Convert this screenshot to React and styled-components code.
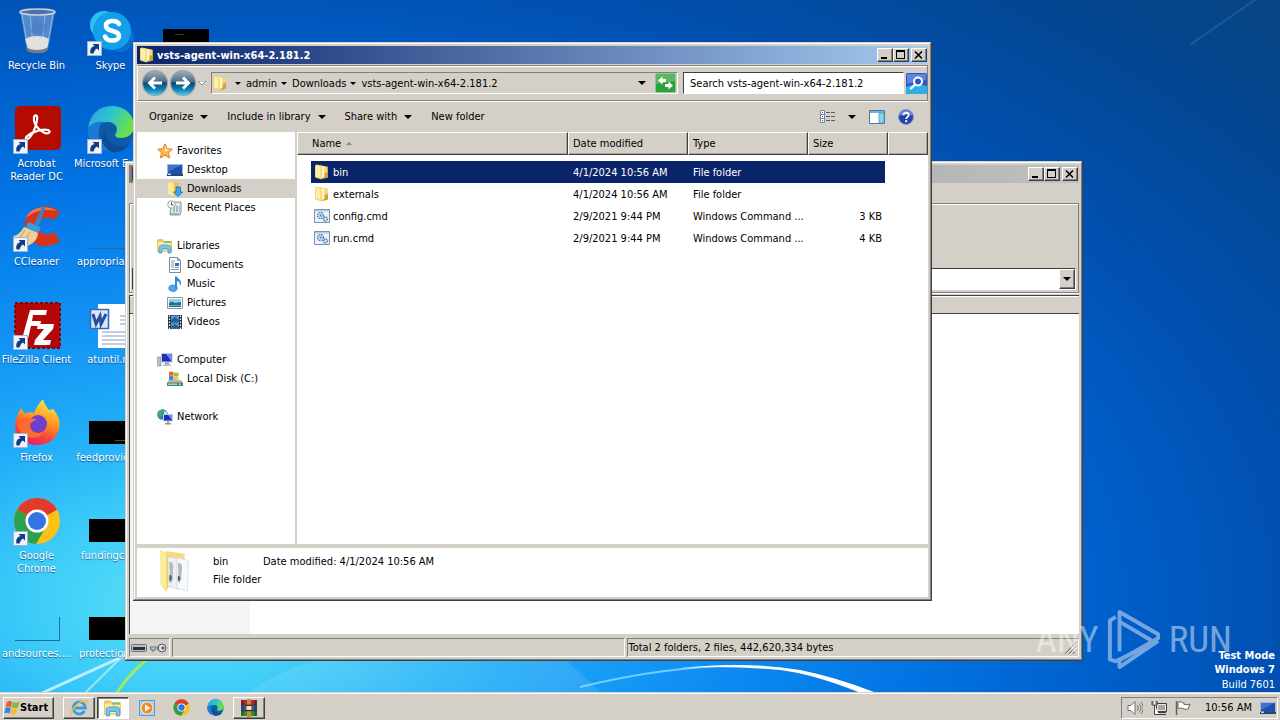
import React from "react";
import styled, { createGlobalStyle, css } from "styled-components";

const FACE = "#d4d0c8";
const NAVY = "#0a246a";

const Global = createGlobalStyle`
  html, body { margin: 0; height: 100%; }
  body, button, input, select, table {
    font-family: "DejaVu Sans Condensed", "DejaVu Sans", sans-serif;
    font-size: 11px;
    line-height: 13px;
    color: #000;
  }
  *, *::before, *::after { box-sizing: border-box; }
  button { margin: 0; padding: 0; border: 0; background: none; }
  svg { display: block; flex: none; }
`;

const raised = css`
  border: 1px solid;
  border-color: #fff #404040 #404040 #fff;
  box-shadow: inset -1px -1px 0 #808080;
  background: ${FACE};
`;

/* ---------- desktop ---------- */

const Screen = styled.div`
  display: grid;
  grid-template-rows: 1fr auto;
  min-height: 100vh;
  background: #0056b8;
`;

const Desktop = styled.main`
  position: relative;
  overflow: hidden;
  background: radial-gradient(
    ellipse 86% 92% at 15% 87%,
    #5be0f8 0%,
    #3fcdf8 14%,
    #22aef8 28%,
    #1090f4 46%,
    #0274e4 66%,
    #0060cc 82%,
    #0150b0 100%,
    #03458e 124%,
    #0a4580 140%
  );
`;

const Rays = styled.svg`
  position: absolute;
  inset: 0;
  width: 100%;
  height: 100%;
`;

const IconGrid = styled.ul`
  position: relative;
  display: grid;
  grid-auto-flow: column;
  grid-template-rows: repeat(6, 98px) 64px;
  grid-auto-columns: 74px;
  list-style: none;
  margin: 0;
  padding: 8px 0 0;
  width: max-content;
`;

const Shortcut = styled.a`
  display: flex;
  flex-direction: column;
  align-items: center;
  gap: 3px;
  width: 73px;
  color: #fff;
  text-decoration: none;
  text-align: center;
  text-shadow: 0 1px 1px rgba(0, 20, 80, 0.6);
  white-space: ${(p) => (p.$wrap ? "normal" : "nowrap")};
`;

const Watermark = styled.div`
  position: absolute;
  right: 48px;
  bottom: 20px;
  display: flex;
  align-items: center;
  gap: 7px;
  color: #fff;
  opacity: 0.45;
  font-family: "Roboto Condensed", "Liberation Sans Narrow", "Liberation Sans", sans-serif;
  font-size: 37px;
  line-height: 64px;
  pointer-events: none;
`;

const BuildNote = styled.p`
  position: absolute;
  right: 5px;
  bottom: 0;
  margin: 0;
  color: #fff;
  text-align: right;
  line-height: 15px;
  strong { display: block; line-height: 14px; }
`;

/* ---------- window chrome ---------- */

const Window = styled.section`
  position: absolute;
  left: ${(p) => p.$left}px;
  right: ${(p) => p.$right}px;
  top: ${(p) => p.$top}px;
  bottom: ${(p) => p.$bottom}px;
  display: flex;
  flex-direction: column;
  padding: 4px;
  background: ${FACE};
  box-shadow: inset -1px -1px 0 #404040, inset 1px 1px 0 ${FACE},
    inset -2px -2px 0 #808080, inset 2px 2px 0 #fff;
`;

const TitleBar = styled.header`
  display: flex;
  align-items: center;
  height: 18px;
  flex: none;
  padding: 0 1px 0 2px;
  gap: 2px;
  color: #fff;
  font-weight: bold;
  background: ${(p) =>
    p.$active
      ? "linear-gradient(to right, #0a246a, #a6caf0)"
      : "linear-gradient(to right, #808080, #c0c0c0)"};
  h1 { flex: 1; margin: 0; font-size: 11px; line-height: 13px; }
`;

const Controls = styled.div`
  display: flex;
  button:last-child { margin-left: 2px; }
`;

const ControlButton = styled.button`
  ${raised}
  width: 16px;
  height: 14px;
  display: grid;
  place-items: center;
`;

const WindowControls = () => (
  <Controls>
    <ControlButton aria-label="Minimize">
      <svg width="12" height="10"><path d="M2 7h6v2H2z" /></svg>
    </ControlButton>
    <ControlButton aria-label="Maximize">
      <svg width="12" height="10"><path d="M1 0h9v9H1zM2 2v6h7V2z" fillRule="evenodd" /></svg>
    </ControlButton>
    <ControlButton aria-label="Close">
      <svg width="12" height="10"><path d="M2 1.5l7 7M9 1.5l-7 7" stroke="#000" strokeWidth="1.6" /></svg>
    </ControlButton>
  </Controls>
);

/* ---------- archive window ---------- */

const MenuStrip = styled.div`
  height: 20px;
  flex: none;
`;

const ToolGroup = styled.div`
  display: flex;
  flex-direction: column;
  justify-content: flex-end;
  flex: none;
  height: 90px;
  padding: 2px;
  border: 1px solid #808080;
  box-shadow: inset 1px 1px 0 #fff, 0 1px 0 #fff;
`;

const PathSelect = styled.label`
  position: relative;
  display: flex;
  height: 22px;
  border: 1px solid;
  border-color: #404040 #fff #fff #404040;
  background: #fff;
  select {
    appearance: none;
    flex: 1;
    border: 0;
    background: #fff;
  }
`;

const DropMark = styled.span`
  ${raised}
  width: 16px;
  display: grid;
  place-items: center;
`;

const ColumnStrip = styled.div`
  height: 19px;
  margin-top: 2px;
  flex: none;
  border-top: 1px solid #404040;
  border-bottom: 1px solid #404040;
  border-left: 1px solid #404040;
  box-shadow: inset 0 1px 0 #fff;
`;

const ArchiveBody = styled.div`
  flex: 1;
  display: grid;
  grid-template-columns: 120px 1fr;
  background: #fff;
  border-left: 1px solid #404040;
  border-right: 1px solid #fff;
  div { background: #f4f4f4; }
`;

const StatusBar = styled.footer`
  display: grid;
  grid-template-columns: 41px 1fr 1fr;
  gap: 2px;
  flex: none;
  padding-top: 4px;
`;

const StatusCell = styled.div`
  display: flex;
  align-items: center;
  height: 19px;
  gap: 3px;
  padding: 0 1px;
  border: 1px solid;
  border-color: #808080 #fff #fff #808080;
  white-space: nowrap;
`;

/* ---------- explorer ---------- */

const NavBar = styled.nav`
  display: flex;
  align-items: center;
  height: 36px;
  flex: none;
  margin-top: 1px;
  padding: 0 0 0 3px;
  border: 1px solid;
  border-color: #808080 #808080 #808080 #fff;
  box-shadow: inset 0 1px 0 #fff, 0 1px 0 #fff;
`;

const IconButton = styled.button`
  display: grid;
  place-items: center;
  flex: none;
  width: ${(p) => p.$w || 22}px;
  height: ${(p) => p.$h || 22}px;
`;

const AddressBar = styled.div`
  display: flex;
  align-items: center;
  flex: 1;
  height: 22px;
  margin: 0 5px 0 4px;
  border: 1px solid;
  border-color: #808080 #fff #fff #808080;
  > svg { margin-right: 3px; }
`;

const Crumb = styled.button`
  display: flex;
  align-items: center;
  gap: 5px;
  margin-left: 4px;
  white-space: nowrap;
`;

const Grow = styled.span`
  flex: 1;
`;

const SearchBox = styled.input`
  width: 221px;
  height: 22px;
  margin-right: 1px;
  padding: 0 6px;
  border: 1px solid;
  border-color: #404040 #fff #fff #404040;
  border-radius: 0;
  background: #fff;
  &::placeholder { color: #000; opacity: 1; }
`;

const CommandBar = styled.div`
  display: flex;
  align-items: center;
  height: 31px;
  flex: none;
  padding: 0 14px 0 12px;
  gap: 19px;
`;

const Command = styled.button`
  display: flex;
  align-items: center;
  gap: ${(p) => (p.$split ? 12 : 7)}px;
  white-space: nowrap;
`;

const ViewTools = styled.div`
  display: flex;
  align-items: center;
  margin-left: auto;
  gap: 13px;
`;

const Panes = styled.div`
  flex: 1;
  display: grid;
  grid-template-columns: 158px 1fr;
  gap: 2px;
  min-height: 0;
`;

const Tree = styled.aside`
  background: #fff;
  padding: 9px 0 0;
  ul { list-style: none; margin: 0 0 19px; padding: 0; }
`;

const TreeItem = styled.a`
  display: flex;
  align-items: center;
  gap: 4px;
  height: 19px;
  padding-left: ${(p) => (p.$root ? 20 : 30)}px;
  background: ${(p) => (p.$selected ? FACE : "transparent")};
  color: #000;
  text-decoration: none;
`;

const FileTable = styled.table`
  display: block;
  background: #fff;
  border-collapse: collapse;
  thead, tbody { display: block; }
  tbody { padding: 6px 43px 0 14px; }
  th, td { font-weight: normal; text-align: left; padding: 0; }
`;

const HeadRow = styled.tr`
  display: grid;
  grid-template-columns: 1fr 120px 120px 80px 40px;
  height: 23px;
`;

const HeadCell = styled.th`
  display: flex;
  align-items: center;
  gap: 5px;
  background: ${FACE};
  border: 1px solid;
  border-color: #fff #404040 #404040 #fff;
  box-shadow: inset -1px -1px 0 #a8a49c;
  && { padding-left: ${(p) => (p.$first ? 14 : 4)}px; }
`;

const FileRow = styled.tr`
  display: grid;
  grid-template-columns: 1fr 120px 120px 77px;
  align-items: center;
  height: 22px;
  background: ${(p) => (p.$selected ? NAVY : "transparent")};
  color: ${(p) => (p.$selected ? "#fff" : "#000")};
  && td { padding-left: 5px; white-space: nowrap; overflow: hidden; text-overflow: ellipsis; }
  && td:first-child { padding-left: 3px; }
  && td:nth-child(3) { padding-right: 4px; }
  && td:last-child { text-align: right; padding-right: 3px; }
`;

const FileName = styled.span`
  display: flex;
  align-items: center;
  gap: 3px;
`;

const Details = styled.footer`
  display: flex;
  flex: none;
  align-items: center;
  gap: 20px;
  height: 49px;
  margin-top: 4px;
  padding: 0 0 4px 20px;
  background: #fff;
  dl { display: grid; grid-template-columns: 50px auto; row-gap: 4px; margin: 0; }
  dt, dd { margin: 0; line-height: 14px; }
`;

/* ---------- taskbar ---------- */

const Taskbar = styled.footer`
  display: flex;
  align-items: center;
  height: 28px;
  padding: 2px 2px 0 3px;
  background: ${FACE};
  border-top: 1px solid ${FACE};
  box-shadow: inset 0 1px 0 #fff;
`;

const StartButton = styled.button`
  ${raised}
  display: flex;
  align-items: center;
  height: 22px;
  width: 51px;
  margin-right: 9px;
  font-weight: bold;
`;

const TaskButton = styled.button`
  display: grid;
  place-items: center;
  width: 32px;
  height: 22px;
  margin-right: 2px;
  ${(p) => p.$open && raised}
  ${(p) =>
    p.$active &&
    css`
      background: #fdfcfa;
      border: 1px solid;
      border-color: #404040 #fff #fff #404040;
      box-shadow: inset 1px 1px 0 #808080;
    `}
`;

const Tray = styled.div`
  display: flex;
  align-items: center;
  gap: 8px;
  height: 22px;
  margin-left: auto;
  padding: 0 1px 0 5px;
  border: 1px solid;
  border-color: #808080 #fff #fff #808080;
  time { margin-left: 6px; white-space: nowrap; }
`;

/* ---------- drawings ---------- */

const Caret = ({ w = 8, color = "#000", stroke }) => (
  <svg width={w} height={w / 2} viewBox="0 0 8 4">
    <path d="M0 0h8L4 4z" fill={color} stroke={stroke} strokeWidth=".8" />
  </svg>
);

const Folder = ({ size = 16 }) => (
  <svg width={size} height={size} viewBox="0 0 16 16">
    <path d="M7 1.500l6.500 1v11L7 15z" fill="#e9c34a" />
    <path d="M10 8l4-1v6.500L9 15z" fill="#cfa235" />
    <path d="M7 2l3.500 .6v10L8 14z" fill="#fff7cf" />
    <path d="M1 1.400L2.500 .5 8 1.500V15.500l-5.500-1.500L1 13z" fill="#f3d870" />
    <path d="M2 1.500L6.500 2.500v11L2 12.500z" fill="#fdf0a6" />
    <path d="M11 3h2.500v5L11 9z" fill="#f5da70" />
  </svg>
);

const Monitor = () => (
  <svg width="16" height="16" viewBox="0 0 16 16">
    <path d="M0 2h16v12H0z" fill="#9db8d8" />
    <path d="M1 3h14v9H1z" fill="#1f4fae" />
    <path d="M1 3h14C9 5 5 8 1 10z" fill="#3c74cc" />
    <path d="M0 12h16v2H0z" fill="#27466f" />
    <path d="M1 11.500h3V13H1z" fill="#9fe0f8" />
  </svg>
);

const Star = () => (
  <svg width="16" height="16" viewBox="0 0 16 16">
    <path d="M8 .8l2.200 4.900 5.200.5-3.900 3.500 1.200 5.300L8 12.200l-4.700 2.800 1.200-5.300L.6 6.200l5.200-.5z" fill="#ffb648" stroke="#dc8430" strokeWidth="1" />
    <path d="M8 3l1.400 3.400 3 .4L8 9z" fill="#fff0b8" />
  </svg>
);

const DownloadFolder = () => (
  <svg width="16" height="16" viewBox="0 0 16 16">
    <path d="M7 1l5 1v12l-5 1z" fill="#e9c34a" />
    <path d="M1 1l6 1v13l-6-2z" fill="#fbe891" />
    <path d="M9 6h4.500v5h2L11 15.500 6.500 11H9z" fill="#3ba4ee" stroke="#1868b8" strokeWidth=".8" />
  </svg>
);

const Recent = () => (
  <svg width="16" height="16" viewBox="0 0 16 16">
    <path d="M4 2h10v10l-1 3H3z" fill="#dde8ea" stroke="#8a989c" />
    <path d="M6 7h7M6 9h7M6 11h7" stroke="#6d8f98" strokeDasharray="2 1" />
    <path d="M2 13h10l1 2H4z" fill="#9cb0b4" />
    <circle cx="4.500" cy="4.500" r="3.800" fill="#f4f8f8" stroke="#9ca8ac" />
    <path d="M4.500 2v3h2" stroke="#345" fill="none" strokeWidth=".8" />
  </svg>
);

const libraryArt = (
  <g>
    <path d="M0 2l1-1h5l1 2h8v11H0z" fill="#ecc95a" />
    <path d="M1 4h13v9H1z" fill="#fbeaa0" />
    <path d="M7 3h7v2H7z" fill="#7fc46a" />
    <path d="M2 15V9.500C2 7.500 4 7 8 7s6 .5 6 2.500V15h-3v-4H5v4z" fill="#7cc4ea" stroke="#3b8cc0" strokeWidth=".7" />
  </g>
);

const Library = () => (
  <svg width="16" height="16" viewBox="0 0 16 16">{libraryArt}</svg>
);

const Explorer = () => (
  <svg width="18" height="18" viewBox="0 0 16 16">{libraryArt}</svg>
);

const Doc = () => (
  <svg width="16" height="16" viewBox="0 0 16 16">
    <path d="M2.500 .5h8l3 3v12h-11z" fill="#fff" stroke="#7b8a9c" />
    <path d="M10.500 .5v3h3z" fill="#a8b8cc" stroke="#7b8a9c" strokeWidth=".7" />
    <path d="M4 4h4M4 6h3M4 8h3M4 10h3M4 12.500h8M8 10.500h4" stroke="#7f98b8" />
    <path d="M8 6h4v3H8z" fill="#2f6fbe" />
  </svg>
);

const Note = () => (
  <svg width="16" height="16" viewBox="0 0 16 16">
    <ellipse cx="6" cy="12.200" rx="4.200" ry="3.200" fill="#4fa8ea" stroke="#1d6fb8" strokeWidth=".6" />
    <path d="M8 .5h2c.5 2 4.500 3.200 4 7-.2 1.300-.8 2-1.200 2.300.5-2.800-.8-4.300-2.800-4.800v7.500H8z" fill="#2f8bdc" />
  </svg>
);

const Photo = () => (
  <svg width="16" height="16" viewBox="0 0 16 16">
    <path d="M.5 2.500h15v11H.5z" fill="#fff" stroke="#8898a4" />
    <path d="M2 4h12v8H2z" fill="#8fd4ee" />
    <path d="M2 8l3-1.500 3 1.500 6-1v5H2z" fill="#1f6f88" />
    <path d="M2 10h12v1H2z" fill="#65b3b8" />
  </svg>
);

const Film = () => (
  <svg width="16" height="16" viewBox="0 0 16 16">
    <path d="M1 1h14v14H1z" fill="#26303c" />
    <path d="M4 1.500h8v6H4zM4 8.500h8v6H4z" fill="#4f9cd8" />
    <path d="M5 5l3-2 4 3v1H4zM5 12l3-2 4 3v1H4z" fill="#2a5c8c" />
    <path d="M2.500 1.500v14M13.500 1.500v14" stroke="#fff" strokeWidth="1.200" strokeDasharray="1.500 1.500" />
  </svg>
);

const Computer = () => (
  <svg width="16" height="16" viewBox="0 0 16 16">
    <path d="M0 5h4v9H0z" fill="#b8c0c8" stroke="#7f8890" strokeWidth=".6" />
    <path d="M4 1h11.500v9.500H4z" fill="#c4ccd8" />
    <path d="M5 2h9.500v7.500H5z" fill="#1a2fc0" />
    <path d="M9 2h5.500v7.500z" fill="#6f8cf0" />
    <path d="M8 10.500h4v2H8z" fill="#8c94a0" />
    <path d="M6 12.500h8v1.500H6z" fill="#b4bcc8" />
  </svg>
);

const WinFlag = () => (
  <svg width="16" height="16" viewBox="0 0 16 16">
    <path d="M3 2c2-1.500 3.500-1.300 5.300-.3L7 7.200c-1.600-1-3.200-.8-5.300.1z" fill="#e8602c" />
    <path d="M9 2c1.800 1 3.600 1 6.500-.5l-1.500 6c-2 1.200-4 1-6.300 0z" fill="#84bc3c" />
    <path d="M1.500 8c2-1 3.600-.9 5.300 0l-1.300 5.500c-1.700-1-3.300-.9-5.300 0z" fill="#3a84dc" />
    <path d="M7.500 8.500c2 .9 3.800.9 6.200-.2l-1.500 5.500c-2 1.200-4 1-6 .1z" fill="#f4bc34" />
  </svg>
);

const Disk = () => (
  <svg width="16" height="16" viewBox="0 0 16 16">
    <path d="M2 1c2-.9 3-.7 4.500 0v4C5 4.500 4 4.500 2 5z" fill="#f0602c" />
    <path d="M7 1.200c1.500.7 3 .7 4.500 0v4c-1.500.7-3 .6-4.500 0z" fill="#8cc63e" />
    <path d="M2 5.500c2-.7 3-.5 4.500 0v4H2z" fill="#3a8ce0" />
    <path d="M7 5.700c1.500.6 3 .6 4.500 0v4H7z" fill="#fbc53a" />
    <path d="M2 9h12l2 3H0z" fill="#b8b89c" />
    <path d="M0 11.500h16V15H0z" fill="#4f7f8c" />
    <path d="M1 12.500h9v1.500H1z" fill="#a8d4c8" />
    <path d="M12 12.500h2v1.500h-2z" fill="#8cf07c" />
  </svg>
);

const Network = () => (
  <svg width="16" height="16" viewBox="0 0 16 16">
    <circle cx="5.500" cy="5.500" r="5.300" fill="#2484b8" />
    <path d="M1 4c2-3 4-4 6-3.500C8 3 5 3 5 5S3 9 2 9z" fill="#4ca86c" />
    <path d="M7 2l3 1v3H7z" fill="#b0e8f4" />
    <path d="M6 5h10v7.500H6z" fill="#c4ccd8" />
    <path d="M7 6h8v5.500H7z" fill="#1a2fc0" />
    <path d="M11 6h4v5.500z" fill="#6f8cf0" />
    <path d="M8 14h6v1.500H8zM10 12.500h2V14h-2z" fill="#8c94a0" />
  </svg>
);

const CmdFile = () => (
  <svg width="16" height="16" viewBox="0 0 16 16">
    <path d="M.5 1.500h15v13H.5z" fill="#eaf2fa" stroke="#7c90ac" />
    <path d="M1 2h14v1.500H1z" fill="#b8cce0" />
    <circle cx="6.500" cy="7.500" r="3" fill="#cfe2f4" stroke="#5a86b8" strokeWidth="1.400" strokeDasharray="1.600 .8" />
    <circle cx="6.500" cy="7.500" r="1" fill="#4a78ac" />
    <circle cx="11.500" cy="11" r="2" fill="#cfe2f4" stroke="#4a78ac" strokeWidth="1.300" strokeDasharray="1.200 .6" />
  </svg>
);

const NavBall = ({ flip, id }) => (
  <svg width="28" height="28" viewBox="0 0 28 28">
    <defs>
      <linearGradient id={id} x1="0" y1="0" x2="0" y2="1">
        <stop offset="0" stopColor="#a4b0b8" />
        <stop offset=".44" stopColor="#4c7088" />
        <stop offset=".5" stopColor="#0a4870" />
        <stop offset=".78" stopColor="#1088bc" />
        <stop offset="1" stopColor="#50d4f4" />
      </linearGradient>
    </defs>
    <circle cx="14" cy="14" r="12.500" fill={`url(#${id})`} stroke="#98a4ac" strokeWidth="1.200" />
    <path
      d="M13 7.500l-6.500 6.500 6.500 6.500 2-2-3-3H21v-3h-9l3-3z"
      fill="#fff"
      transform={flip ? "translate(28 0) scale(-1 1)" : undefined}
    />
  </svg>
);

const Refresh = () => (
  <svg width="21" height="20" viewBox="0 0 21 20">
    <rect x=".5" y=".5" width="20" height="19" rx="1.500" fill="#2ca03c" stroke="#8cc49a" />
    <path d="M1 1h19v7L1 11z" fill="#58b860" />
    <path d="M3 7.500L7.500 3.500v2.500H11v3H7.500v2.500z" fill="#fff" />
    <path d="M18 12.500L13.500 8.500v2.500H10v3h3.500v2.500z" fill="#fff" />
  </svg>
);

const SearchGlass = () => (
  <svg width="21" height="21" viewBox="0 0 21 21">
    <rect width="21" height="21" rx="1.500" fill="#2c54c8" />
    <path d="M0 14c7-3 14-3 21-1v8H0z" fill="#2bb0e4" />
    <path d="M1 1h19v6L1 11z" fill="#6084dc" />
    <circle cx="12" cy="8.500" r="4" fill="#2f58c4" stroke="#fff" strokeWidth="2" />
    <path d="M9 11.500L5 15.500" stroke="#fff" strokeWidth="2.400" strokeLinecap="round" />
  </svg>
);

const ViewIcon = () => (
  <svg width="16" height="13" viewBox="0 0 16 13">
    <path d="M.5.500h4v12h-4z" fill="#fff" stroke="#7c84a0" />
    <path d="M.5 4.500h4M.5 8.500h4" stroke="#7c84a0" />
    <path d="M2 2.500h1M2 6.500h1M2 10.500h1" stroke="#2f5cc0" />
    <path d="M6 2.500h10M6 6.500h10M6 10.500h10" stroke="#585c64" strokeDasharray="4 1" />
  </svg>
);

const PaneIcon = () => (
  <svg width="16" height="14" viewBox="0 0 16 14">
    <path d="M.5.500h15v13H.5z" fill="#fff" stroke="#4a78a4" />
    <path d="M1 1h14v2H1z" fill="#7cacdc" />
    <path d="M10 3h5v10h-5z" fill="#8cd4ec" stroke="#4a90b8" strokeWidth=".7" />
  </svg>
);

const HelpIcon = () => (
  <svg width="16" height="16" viewBox="0 0 16 16">
    <circle cx="8" cy="8" r="7.500" fill="#2444ac" stroke="#8c9cc8" />
    <path d="M1.500 7a6.500 6 0 0 1 13 0c-4-2-9-2-13 0z" fill="#6c88d8" />
    <path d="M5.500 6.200C5.500 3 10.700 3 10.700 6c0 1.800-2.500 2-2.500 4" fill="none" stroke="#fff" strokeWidth="1.800" />
    <circle cx="8.200" cy="12.200" r="1.100" fill="#fff" />
  </svg>
);

const BigFolder = () => (
  <svg width="36" height="44" viewBox="0 0 36 46">
    <path d="M8 2l20 3v6L10 8z" fill="#f4dc80" />
    <path d="M10 8l12 2v32l-12-3z" fill="#eef0f4" stroke="#c8ccd4" strokeWidth=".6" />
    <path d="M20 9l12 3-1 32-11-3z" fill="#f8f9fb" stroke="#c8ccd4" strokeWidth=".6" />
    <path d="M12 14c3-2 5 2 4 8s2 10-3 14zM21 15c4-2 5 3 4 9s1 7-3 12z" fill="#b4bac2" />
    <path d="M12 27c4 1 3 6 0 7zM21 28c4 1 3 5 0 6z" fill="#4c6078" />
    <path d="M3 1l8 5v33l-2 6-6-8z" fill="#ecd064" />
    <path d="M2 1h2l5 5v38L3 37z" fill="#fbec9c" />
  </svg>
);

const Badge = () => (
  <g>
    <path d="M5.500 33.500h14v14h-14z" fill="#eef4fc" stroke="#9cb4d4" />
    <path d="M8.500 45.500c-.800-4 .5-6.500 4-7.500l-2-2h6.500v6.500l-2-2c-2.500 1-2.500 3-3.500 5z" fill="#123c84" />
  </g>
);

const Big = ({ children, shortcut = true }) => (
  <svg width="58" height="48" viewBox="0 0 58 48">
    {children}
    {shortcut && <Badge />}
  </svg>
);

const RecycleBin = () => (
  <Big shortcut={false}>
    <path d="M12 3h35l-7 38c-5 4-16 4-21 0z" fill="#7ca4d4" fillOpacity=".65" />
    <path d="M14 6l6 34M45 6l-6 34M22 6l3 32M37 6l-3 32" stroke="#dceaf8" strokeOpacity=".45" />
    <path d="M17 31c6-4 18-4 24 0l-2 10c-5 3-14 3-19 0z" fill="#dfe0e0" />
    <path d="M18 39c5 4 17 4 22 0l-1 4c-4 3-16 3-20 0z" fill="#747c84" />
    <path d="M27 11l12 6-5 10-12-3z" fill="#4f7cc8" fillOpacity=".6" />
    <ellipse cx="29.500" cy="4" rx="17.500" ry="3" fill="#4c74ac" stroke="#c8d0d8" strokeWidth="1.600" />
  </Big>
);

const Skype = () => (
  <Big>
    <circle cx="22" cy="17" r="14" fill="#2cc0f4" />
    <circle cx="38" cy="30" r="14" fill="#0a70d0" />
    <circle cx="30" cy="23" r="19" fill="#14a0e8" />
    <path d="M37 16c-2-4-13-4.500-13 1.500 0 7 13 4 13 10.500 0 6-12 6-14 .5" fill="none" stroke="#fff" strokeWidth="4.600" strokeLinecap="round" />
  </Big>
);

const Acrobat = () => (
  <Big>
    <rect x="7" y="0" width="46" height="44" rx="5" fill="#b30b00" />
    <path d="M18 34c-2-5 14-12 22-10 4 2 0 5-5 2-7-4-10-10-9-15 1-3 4-2 3 3-1 7-5 18-11 20z" fill="none" stroke="#fff" strokeWidth="2.200" />
  </Big>
);

const EdgeShape = ({ uid }) => (
  <g>
    <defs>
      <linearGradient id={uid} x1="0" y1="0" x2="1" y2=".4">
        <stop offset="0" stopColor="#2f9ce4" />
        <stop offset=".5" stopColor="#2cc4d0" />
        <stop offset="1" stopColor="#6ae04c" />
      </linearGradient>
    </defs>
    <circle cx="24" cy="24" r="23" fill="#1058a8" />
    <path d="M1 23C3 8 13 1 25 1c13 0 22 9 22 20 0 8-6 12-13 12-5 0-7-2-5-5 3-5-1-11-8-11C11 17 3 20 1 23z" fill={`url(#${uid})`} />
    <path d="M1 24c2-5 8-8 15-7-6 5-6 17 1 23 3 3 7 5 11 6C13 49 0 39 1 24z" fill="#1a7ad4" />
    <path d="M19 24c-2 9 5 17 14 17 5 0 8-1 11-4-4 7-11 11-18 10-11-3-14-17-7-23z" fill="#0f4c98" />
  </g>
);

const Edge = () => <Big><g transform="translate(5 -1)"><EdgeShape uid="edgeBig" /></g></Big>;

const CCleaner = () => (
  <Big>
    <path d="M52 8c-12-11-35-5-35 13 0 20 22 27 35 16l-6-9c-7 5-15 2-15-6s8-10 15-6z" fill="#d8341c" />
    <path d="M49 7C39 0 22 3 18 14c9-8 20-9 31-7z" fill="#f07850" />
    <path d="M34 3l3 1-7 20-5-2z" fill="#3c84c0" />
    <path d="M21 18l12 6-3 5-13-5z" fill="#3f9cdc" />
    <path d="M16 23l14 6c0 7-6 12-14 14L5 32c4 0 8-4 11-9z" fill="#ecd09c" />
    <path d="M17 26l-6 9M22 28l-6 10" stroke="#c89c60" />
  </Big>
);

const FileZilla = () => (
  <Big>
    <rect x="7" y="1" width="45" height="45" fill="#b40808" stroke="#860404" strokeWidth="2" strokeDasharray="3 2" />
    <path d="M22 8h17l-1 5H25l-1 6h9l-1 5h-9l-3 13h-6zM30 22h16l-1 5-10 11h8l-1 5H26l1-5 9-11h-7z" fill="#fff" />
  </Big>
);

const Firefox = () => (
  <Big>
    <defs>
      <linearGradient id="ff" x1=".7" y1="0" x2=".3" y2="1">
        <stop offset="0" stopColor="#ffe84c" />
        <stop offset=".4" stopColor="#ff9c24" />
        <stop offset=".75" stopColor="#fc4038" />
        <stop offset="1" stopColor="#e01c70" />
      </linearGradient>
    </defs>
    <path d="M13 8l4 6c3-2 6-2 9-1 2-5 5-10 9-14 1 5 4 8 6 11l4-1c5 6 8 12 6 20-3 11-12 16-22 16S8 38 7 27c0-6 2-12 6-19z" fill="url(#ff)" />
    <circle cx="30" cy="24" r="9" fill="#7040cc" />
    <path d="M12 18c7-2 11 1 16 1-1 3-6 2-6 7 1 7 9 9 14 5-3 10-23 9-26-5z" fill="#ff6a2c" />
  </Big>
);

const ChromeShape = () => (
  <g>
    <circle cx="24" cy="24" r="23" fill="#fbc116" />
    <path d="M24 24L4.100 12.500A23 23 0 0 1 44 12.500z" fill="#e23b2e" />
    <path d="M44 12.500H24v11z" fill="#e23b2e" />
    <path d="M24 24L4.100 12.500A23 23 0 0 0 23 47l10-17z" fill="#2da04c" />
    <circle cx="24" cy="24" r="11.500" fill="#fff" />
    <circle cx="24" cy="24" r="9" fill="#3474e0" />
  </g>
);

const Chrome = () => <Big><g transform="translate(5 -1)"><ChromeShape /></g></Big>;

const WordDoc = () => (
  <Big shortcut={false}>
    <path d="M16 2h34v44H16z" fill="#fff" />
    <path d="M20 30h28M20 34h28M20 38h28M20 42h28M38 14h10M38 18h10M38 22h10" stroke="#7c9cd0" />
    <path d="M8.500 7.500h18v19h-18z" fill="#dce8fa" stroke="#3c68b4" strokeWidth="1.600" />
    <path d="M11 12l3 10 4-8 1 8 5-10" fill="none" stroke="#2450a4" strokeWidth="3" />
  </Big>
);

const BlackThumb = ({ mark }) => (
  <Big shortcut={false}>
    <path d="M7 21h46v23H7z" fill="#000" />
    {mark}
  </Big>
);

const ClearThumb = () => (
  <Big shortcut={false}>
    <path d="M7 44.500h44.500V21" fill="none" stroke="#1c6ca8" />
  </Big>
);

const WinRar = ({ size = 18 }) => (
  <svg width={size} height={size} viewBox="0 0 18 18">
    <path d="M1 1h16v5H1z" fill="#b42444" />
    <path d="M1 6.500h16v5H1z" fill="#2c60b8" />
    <path d="M1 12h16v5H1z" fill="#388c3c" />
    <path d="M1 1h3v16H1zM14 1h3v16h-3z" fill="#000" fillOpacity=".25" />
    <path d="M7 0h4v18H7z" fill="#c88c34" />
    <path d="M6 6.500h6v5H6z" fill="#f0e4b4" stroke="#6c4410" />
    <path d="M1 6.200h16M1 11.700h16" stroke="#1c1c1c" strokeWidth=".8" />
  </svg>
);

const IE = () => (
  <svg width="18" height="18" viewBox="0 0 18 18">
    <path d="M14.500 12a6 6 0 1 1 .8-3H5" fill="none" stroke="#3c9ce0" strokeWidth="2.800" />
    <path d="M1.500 16C-1 12 9 2 16 1.500c1.500 0 1.500 2 0 4" fill="none" stroke="#f0c040" strokeWidth="1.400" />
  </svg>
);

const Media = () => (
  <svg width="18" height="18" viewBox="0 0 18 18">
    <path d="M1.500 1.500h15v15h-15z" fill="#a8d0f0" stroke="#5c98cc" />
    <circle cx="9" cy="9" r="6" fill="#f48c1c" stroke="#fff" strokeWidth=".8" />
    <path d="M7 5.500v7L12.500 9z" fill="#fff" />
  </svg>
);

const Speaker = () => (
  <svg width="16" height="16" viewBox="0 0 16 16" fill="none" stroke="#707070">
    <path d="M1 5.500h3l4-4v13l-4-4H1z" fill="#fff" />
    <path d="M10 5c1.500 2 1.500 4 0 6M12 3.500c2.500 3 2.500 6 0 9M14 2c3 4 3 8 0 12" />
  </svg>
);

const NetTray = () => (
  <svg width="16" height="16" viewBox="0 0 16 16">
    <path d="M5.500 3.500h10v8h-10z" fill="#a8a8a8" stroke="#404040" />
    <path d="M6.500 4.500h8v6h-8z" fill="none" stroke="#e8e8e8" />
    <path d="M5 12.500h10M8 14.500h7" stroke="#404040" />
    <path d="M1 1v4h5V1M3.500 5v9.500H8M2 1v3M5 1v3" stroke="#404040" fill="#fff" />
  </svg>
);

const Flag = () => (
  <svg width="16" height="16" viewBox="0 0 16 16">
    <path d="M1.500 1v14" stroke="#606060" strokeWidth="1.500" />
    <path d="M3 2c3-1 4 1 6 1v1.500c2 0 4 .5 6-.5l-2 5c-2 .8-4 0-5-.5-2-.5-3-.5-5 0z" fill="#fff" stroke="#606060" />
  </svg>
);

const Drive = () => (
  <svg width="16" height="8"><rect x=".5" y=".5" width="15" height="7" rx="1" fill="#b8c0c8" stroke="#687480" /><path d="M2 3h12v3H2z" fill="#283038" /></svg>
);

const Key = () => (
  <svg width="17" height="10" viewBox="0 0 17 10"><circle cx="12" cy="5" r="4" fill="#d8dcdf" stroke="#505860" /><circle cx="13" cy="5" r="1.500" fill="#505860" /><path d="M8 4H0v2h2v2h2V6h4z" fill="#c8ccd0" stroke="#505860" strokeWidth=".8" /></svg>
);

const Grip = () => (
  <svg width="12" height="12"><path d="M0 12L12 0M4 12l8-8M8 12l4-4" stroke="#808080" strokeWidth="1.500" /><path d="M1 12L12 1M5 12l7-7M9 12l3-3" stroke="#fff" strokeWidth=".7" /></svg>
);

/* ---------- data ---------- */

const shortcuts = [
  ["Recycle Bin", <RecycleBin />],
  ["Acrobat Reader DC", <Acrobat />, true],
  ["CCleaner", <CCleaner />],
  ["FileZilla Client", <FileZilla />],
  ["Firefox", <Firefox />],
  ["Google Chrome", <Chrome />, true],
  ["andsources....", <ClearThumb />],
  ["Skype", <Skype />],
  ["Microsoft Edge", <Edge />],
  ["appropriate...", <ClearThumb />],
  ["atuntil.rtf", <WordDoc />],
  ["feedprovide...", <BlackThumb mark={<path d="M33 40.500h10" stroke="#5c5410" />} />],
  ["fundingch...", <BlackThumb />],
  ["protection....", <BlackThumb />],
  ["", <BlackThumb mark={<path d="M19 26.500h9" stroke="#0c5c14" />} />],
];

const tree = [
  [["Favorites", <Star />], ["Desktop", <Monitor />], ["Downloads", <DownloadFolder />], ["Recent Places", <Recent />]],
  [["Libraries", <Library />], ["Documents", <Doc />], ["Music", <Note />], ["Pictures", <Photo />], ["Videos", <Film />]],
  [["Computer", <Computer />], ["Local Disk (C:)", <Disk />]],
  [["Network", <Network />]],
];

const files = [
  ["bin", "4/1/2024 10:56 AM", "File folder", "", <Folder />],
  ["externals", "4/1/2024 10:56 AM", "File folder", "", <Folder />],
  ["config.cmd", "2/9/2021 9:44 PM", "Windows Command ...", "3 KB", <CmdFile />],
  ["run.cmd", "2/9/2021 9:44 PM", "Windows Command ...", "4 KB", <CmdFile />],
];

const ArchiveWindow = () => (
  <Window $left={125} $right={197} $top={161} $bottom={31} aria-label="Archive">
    <TitleBar>
      <WinRar size={16} />
      <Grow />
      <WindowControls />
    </TitleBar>
    <MenuStrip />
    <ToolGroup>
      <PathSelect>
        <select aria-label="Path"><option></option></select>
        <DropMark><Caret /></DropMark>
      </PathSelect>
    </ToolGroup>
    <ColumnStrip />
    <ArchiveBody><div /></ArchiveBody>
    <StatusBar>
      <StatusCell><Drive /><Key /></StatusCell>
      <StatusCell />
      <StatusCell>Total 2 folders, 2 files, 442,620,334 bytes<Grow /><Grip /></StatusCell>
    </StatusBar>
  </Window>
);

const ExplorerWindow = () => (
  <Window $left={133} $right={348} $top={42} $bottom={91} aria-label="Explorer">
    <TitleBar $active>
      <Folder />
      <h1>vsts-agent-win-x64-2.181.2</h1>
      <WindowControls />
    </TitleBar>
    <NavBar>
      <IconButton $w={28} $h={28} aria-label="Back"><NavBall id="ballBack" /></IconButton>
      <IconButton $w={28} $h={28} aria-label="Forward"><NavBall id="ballNext" flip /></IconButton>
      <IconButton $w={10} aria-label="Recent pages"><Caret color="#fff" stroke="#707070" /></IconButton>
      <AddressBar>
        <Folder />
        <Crumb><Caret w={6} />admin</Crumb>
        <Crumb><Caret w={6} />Downloads</Crumb>
        <Crumb><Caret w={6} />vsts-agent-win-x64-2.181.2</Crumb>
        <Grow />
        <IconButton aria-label="Previous locations"><Caret /></IconButton>
        <IconButton $w={24} aria-label="Refresh"><Refresh /></IconButton>
      </AddressBar>
      <SearchBox type="text" aria-label="Search" placeholder="Search vsts-agent-win-x64-2.181.2" />
      <IconButton aria-label="Go"><SearchGlass /></IconButton>
    </NavBar>
    <CommandBar>
      <Command>Organize <Caret /></Command>
      <Command>Include in library <Caret /></Command>
      <Command>Share with <Caret /></Command>
      <Command>New folder</Command>
      <ViewTools>
        <Command $split aria-label="Change view"><ViewIcon /><Caret /></Command>
        <Command aria-label="Preview pane"><PaneIcon /></Command>
        <Command aria-label="Help"><HelpIcon /></Command>
      </ViewTools>
    </CommandBar>
    <Panes>
      <Tree>
        {tree.map((group) => (
          <ul key={group[0][0]}>
            {group.map(([name, icon], i) => (
              <li key={name}>
                <TreeItem href="#" $root={i === 0} $selected={name === "Downloads"}>{icon}{name}</TreeItem>
              </li>
            ))}
          </ul>
        ))}
      </Tree>
      <FileTable>
        <thead>
          <HeadRow>
            <HeadCell $first>Name <svg width="6" height="3"><path d="M0 3h6L3 0z" fill="#888" /></svg></HeadCell>
            <HeadCell>Date modified</HeadCell>
            <HeadCell>Type</HeadCell>
            <HeadCell>Size</HeadCell>
            <HeadCell />
          </HeadRow>
        </thead>
        <tbody>
          {files.map(([name, date, type, size, icon], i) => (
            <FileRow key={name} $selected={i === 0}>
              <td><FileName>{icon}{name}</FileName></td>
              <td>{date}</td>
              <td>{type}</td>
              <td>{size}</td>
            </FileRow>
          ))}
        </tbody>
      </FileTable>
    </Panes>
    <Details>
      <BigFolder />
      <dl>
        <dt>bin</dt>
        <dd>Date modified: 4/1/2024 10:56 AM</dd>
        <dt>File&nbsp;folder</dt>
      </dl>
    </Details>
  </Window>
);

export default function App() {
  return (
    <>
      <Global />
      <Screen>
        <Desktop>
          <Rays viewBox="0 0 1280 693" preserveAspectRatio="none" fill="none">
            <path d="M40 695L150 645" stroke="#d8f8ff" strokeWidth="3" strokeOpacity=".8" />
            <path d="M84 695L140 640" stroke="#d8f8ff" strokeWidth="2" strokeOpacity=".6" />
            <path d="M116 695Q132 670 160 650" stroke="#9cec5c" strokeWidth="3" />
            <path d="M250 693Q300 655 380 655L560 655L600 693z" fill="#fff" fillOpacity=".1" />
            <path d="M580 688Q670 666 745 667" stroke="#8cdcff" strokeWidth="2" strokeOpacity=".8" />
            <path d="M680 669Q750 662 800 671Q840 679 884 697L868 697Q815 675 780 671Q730 666 680 669z" fill="#fff" />
            <path d="M1190 45L1262 -5" stroke="#5c94d0" strokeWidth="2" strokeOpacity=".25" />
          </Rays>
          <IconGrid>
            {shortcuts.map(([name, icon, wrap], i) => (
              <li key={i}>
                <Shortcut href="#" $wrap={wrap}>{icon}{name}</Shortcut>
              </li>
            ))}
          </IconGrid>
          <ArchiveWindow />
          <ExplorerWindow />
          <Watermark>
            <span>ANY</span>
            <svg width="56" height="62" viewBox="0 0 58 64" fill="none" stroke="#fff" strokeWidth="4" strokeLinejoin="round">
              <path d="M10 8L4 12v40l6 2 42-20" />
              <path d="M14 44V3l40 23v4L14 53v7l40-27" />
              <path d="M14 13l34 20" />
            </svg>
            <span>RUN</span>
          </Watermark>
          <BuildNote>
            <strong>Test Mode</strong>
            <strong>Windows 7</strong>
            Build 7601
          </BuildNote>
        </Desktop>
        <Taskbar>
          <StartButton><WinFlag />Start</StartButton>
          <TaskButton $open aria-label="Internet Explorer"><IE /></TaskButton>
          <TaskButton $active aria-label="Windows Explorer"><Explorer /></TaskButton>
          <TaskButton aria-label="Media Player"><Media /></TaskButton>
          <TaskButton aria-label="Chrome"><svg width="17" height="17" viewBox="0 0 48 48"><ChromeShape /></svg></TaskButton>
          <TaskButton aria-label="Edge"><svg width="17" height="17" viewBox="0 0 48 48"><EdgeShape uid="edgeSmall" /></svg></TaskButton>
          <TaskButton $open aria-label="WinRAR"><WinRar /></TaskButton>
          <Tray>
            <Speaker />
            <NetTray />
            <Flag />
            <time>10:56 AM</time>
            <Monitor />
          </Tray>
        </Taskbar>
      </Screen>
    </>
  );
}
